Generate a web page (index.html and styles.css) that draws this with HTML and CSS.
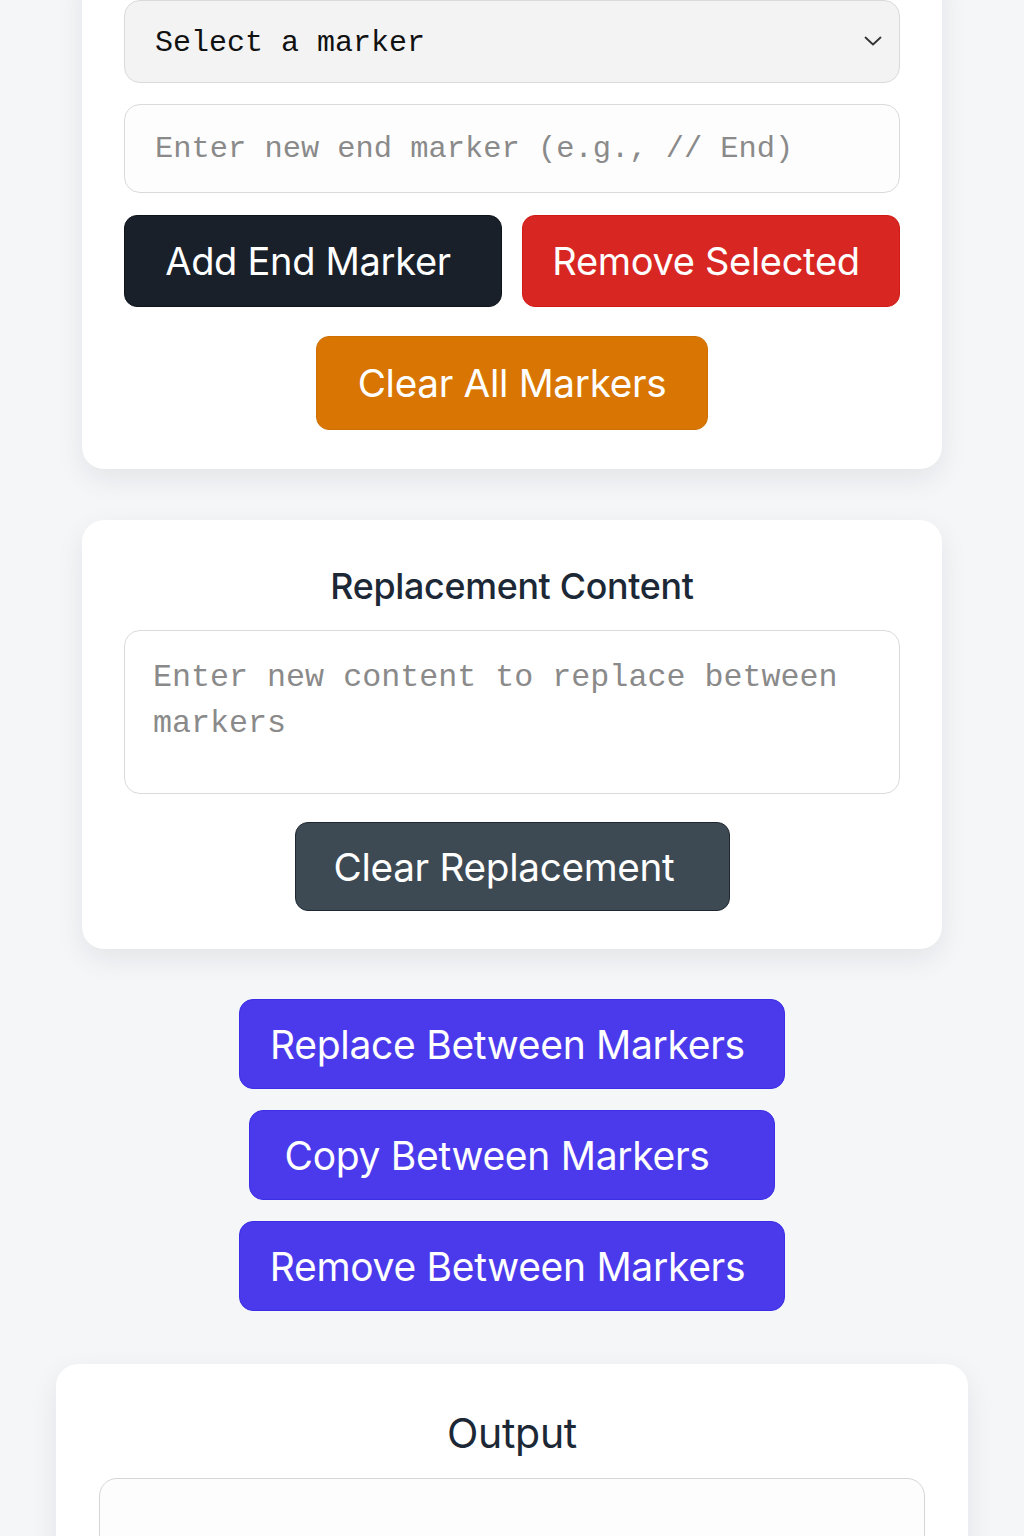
FILE: index.html
```html
<!DOCTYPE html>
<html lang="en">
<head>
<meta charset="utf-8">
<title>Marker Tool</title>
<link rel="stylesheet" href="styles.css">
</head>
<body>
<main class="page">
  <section class="card card-markers">
    <div class="select-wrap">
      <select class="field select">
        <option>Select a marker</option>
      </select>
      <svg class="chevron" width="18" height="10" viewBox="0 0 18 10" aria-hidden="true"><path d="M1.5 1.5 L9 8.5 L16.5 1.5" fill="none" stroke="#333" stroke-width="1.8" stroke-linecap="round" stroke-linejoin="round"/></svg>
    </div>
    <input class="field input" type="text" placeholder="Enter new end marker (e.g., // End)">
    <div class="btn-row">
      <button class="btn btn-dark">Add End Marker</button>
      <button class="btn btn-red">Remove Selected</button>
    </div>
    <div class="center">
      <button class="btn btn-orange">Clear All Markers</button>
    </div>
  </section>

  <section class="card card-replace">
    <h2 class="card-title">Replacement Content</h2>
    <textarea class="field textarea" placeholder="Enter new content to replace between markers"></textarea>
    <div class="center">
      <button class="btn btn-slate">Clear Replacement</button>
    </div>
  </section>

  <div class="actions">
    <button class="btn btn-indigo btn-wide">Replace Between Markers</button>
    <button class="btn btn-indigo btn-copy">Copy Between Markers</button>
    <button class="btn btn-indigo btn-wide">Remove Between Markers</button>
  </div>

  <section class="card card-output">
    <h2 class="card-title title-output">Output</h2>
    <div class="output-box"></div>
  </section>
</main>
</body>
</html>
```

FILE: styles.css
```css
* { box-sizing: border-box; }

html, body {
  margin: 0;
  padding: 0;
  background: #f5f6f8;
}

body {
  font-family: Inter, "Noto Sans", sans-serif;
  color: #1f2937;
  overflow: hidden;
  height: 1536px;
}

.page {
  display: flex;
  flex-direction: column;
  align-items: center;
  margin-top: -42px;
}

.card {
  background: #ffffff;
  border-radius: 22px;
  box-shadow: 0 10px 28px rgba(15, 23, 42, 0.08);
}

.card-markers {
  width: 860px;
  padding: 42px 42px 39px;
  display: flex;
  flex-direction: column;
}

.select-wrap {
  position: relative;
}

.field {
  display: block;
  width: 100%;
  font-family: "Liberation Mono", "Courier New", monospace;
  font-size: 30px;
  border: 1px solid #d9dadc;
  border-radius: 16px;
  outline: none;
  color: #111;
}

.select {
  appearance: none;
  -webkit-appearance: none;
  height: 83px;
  padding: 2px 30px 0;
  background: #f3f3f4;
  color: #111;
}

.chevron {
  position: absolute;
  right: 18px;
  top: 36px;
}

.input {
  margin-top: 21px;
  height: 89px;
  padding: 0 30px;
  font-size: 30.4px;
  background: #fdfdfd;
}

.field::placeholder {
  color: #8a8a8a;
}

.btn-row {
  margin-top: 22px;
  display: grid;
  grid-template-columns: 1fr 1fr;
  gap: 20px;
}

.btn {
  font-family: Inter, "Noto Sans", sans-serif;
  font-size: 38px;
  font-weight: 400;
  letter-spacing: -0.3px;
  color: #ffffff;
  border: 1px solid transparent;
  border-radius: 13px;
  cursor: pointer;
  padding: 0 10px 0 0;
}

.btn-row .btn {
  height: 92px;
}

.btn-dark {
  background: #19202a;
  border-color: #0f141b;
}

.btn-red {
  background: #d82723;
  border-color: #d01a15;
}

.center {
  display: flex;
  justify-content: center;
}

.btn-orange {
  margin-top: 29px;
  width: 392px;
  height: 94px;
  font-size: 38.7px;
  padding: 0;
  background: #d97603;
  border-color: #d07002;
}

.card-replace {
  margin-top: 51px;
  width: 860px;
  padding: 42px 42px 38px;
  display: flex;
  flex-direction: column;
}

.card-title {
  margin: 0;
  text-align: center;
  font-size: 35.8px;
  font-weight: 500;
  line-height: 48px;
  color: #1c2836;
  letter-spacing: -0.3px;
}

.textarea {
  margin-top: 20px;
  height: 164px;
  padding: 24px 28px;
  resize: none;
  font-size: 31.7px;
  line-height: 46px;
  background: #ffffff;
}

.btn-slate {
  margin-top: 28px;
  width: 435px;
  height: 89px;
  font-size: 38.7px;
  padding-right: 16px;
  background: #3d4a54;
  border-color: #1f2830;
}

.actions {
  margin-top: 50px;
  display: flex;
  flex-direction: column;
  align-items: center;
  gap: 21px;
}

.btn-indigo {
  height: 90px;
  font-size: 39px;
  background: #4a3aec;
  border-color: #3b2ee6;
  border-radius: 14px;
}

.btn-wide {
  width: 546px;
  padding-right: 9px;
}

.btn-copy {
  width: 526px;
  padding-right: 30px;
}

.card-output {
  margin-top: 53px;
  width: 912px;
  padding: 40px 43px 0;
  height: 300px;
}

.title-output {
  font-size: 41px;
  font-weight: 400;
  line-height: 58px;
}

.output-box {
  margin-top: 16px;
  height: 200px;
  border: 1px solid #d6d6d8;
  border-radius: 18px;
  background: #fdfdfd;
}
```
